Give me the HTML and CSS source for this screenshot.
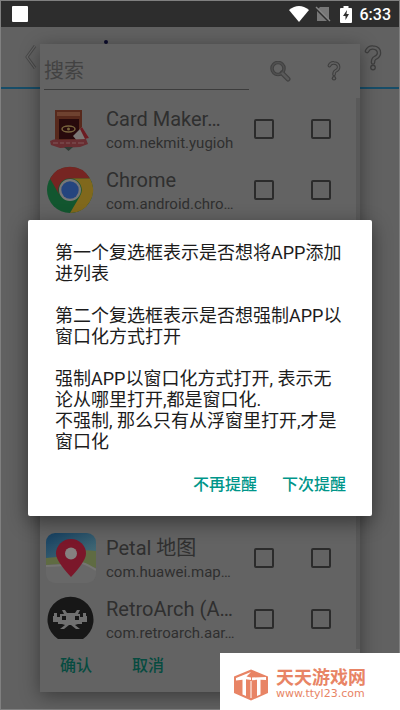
FILE: index.html
```html
<!DOCTYPE html>
<html lang="zh-CN">
<head>
<meta charset="utf-8">
<meta name="viewport" content="width=device-width, initial-scale=1">
<title>搜索</title>
<link rel="stylesheet" href="styles.css">
</head>
<body>
<div class="screen">
  <header class="status">
    <span class="status-app"></span>
    <svg class="status-wifi" viewBox="0 0 20 16"><path d="M0 4Q10-4 20 4L10 16Z" fill="#fff"/></svg>
    <svg class="status-sim" viewBox="0 0 16 16"><path d="M5 1h9v13L3 3Z M2 5l10 10H2Z" fill="#777"/><path d="M1 1l14 14" stroke="#858585" stroke-width="1.4"/></svg>
    <svg class="status-battery" viewBox="0 0 12 17"><path d="M3.500 0h5v2H11q1 0 1 1v13q0 1-1 1H1q-1 0-1-1V3q0-1 1-1h2.500Z" fill="#fff"/><path d="M7 4L3 10h2.500v4L9 8H6.500Z" fill="#2d2d2d"/></svg>
    <time class="status-time">6:33</time>
  </header>

  <div class="toolbar">
    <svg class="back" viewBox="0 0 12 24"><path d="M10 1L2 12l8 11" fill="none" stroke="#494949" stroke-width="3"/><path d="M10 1L2 12l8 11" fill="none" stroke="#656565" stroke-width="1.200"/></svg>
    <svg class="dot" viewBox="0 0 6 6"><circle cx="3" cy="3" r="2" fill="#0c0c2c"/></svg>
    <svg class="help-large" viewBox="0 0 18 26"><use href="#question"/></svg>
  </div>

  <main class="stage">
    <section class="panel">
      <div class="search">
        <input class="search-input" type="text" placeholder="搜索" aria-label="搜索">
        <button class="icon-button" type="button" aria-label="搜索">
          <svg class="glass" viewBox="0 0 21 21"><g fill="none" stroke="#424242"><circle cx="8" cy="7.500" r="6" stroke-width="3.600"/><path d="M12 12l6 6" stroke-width="5" stroke-linecap="round"/></g><g fill="none" stroke="#505050"><circle cx="8" cy="7.500" r="6" stroke-width="1.300"/><path d="M12.500 12.500l5.500 5.500" stroke="#5a5a5a" stroke-width="2.500" stroke-linecap="round"/></g></svg>
        </button>
        <button class="icon-button" type="button" aria-label="帮助">
          <svg class="help-small" viewBox="0 0 18 26">
            <g id="question" fill="none" stroke-linejoin="round" stroke-linecap="round"><path d="M3 6Q5 2 9 2.500Q15 3 15 8Q15 11 11 13Q9 14 9 17.500" stroke="#3e3e3e" stroke-width="4.600"/><circle cx="9" cy="22.500" r="2.900" fill="#3e3e3e"/><path d="M3 6Q5 2 9 2.500Q15 3 15 8Q15 11 11 13Q9 14 9 17.500" stroke="#606060" stroke-width="2"/><circle cx="9" cy="22.500" r="1.500" fill="#606060"/></g>
          </svg>
        </button>
      </div>

      <div class="list">
        <div class="row">
          <svg class="app-icon" viewBox="0 0 50 50">
            <rect x="9" y="6" width="27" height="31" fill="#57291c"/><rect x="11" y="8" width="23" height="4" fill="#6f4230"/><rect x="13" y="15" width="20" height="20" fill="#280a0c"/>
            <ellipse cx="22.500" cy="25" rx="6.500" ry="3" fill="none" stroke="#77633c" stroke-width="1.500"/><circle cx="22.500" cy="25" r="1.500" fill="#77633c"/>
            <path d="M27 32l9-9 7 11-11 4Z" fill="#7b7774"/><path d="M36 23l7 11-4 1-5-10Z" fill="#6c1c22"/>
            <path d="M4 37q5-3 10-1l26-1 2 5-8 3-20 1-9-3Z" fill="#682d31"/>
            <path d="M7 39h5m2 0h4m2 0h4m2 0h4m2 0h6" stroke="#80585a" stroke-width="1.200"/><path d="M18 43h9l-4.500 4Z" fill="#303b35"/>
          </svg>
          <div class="app-text"><div class="app-name">Card Maker…</div><div class="app-package">com.nekmit.yugioh</div></div>
          <input class="check" type="checkbox" aria-label="Card Maker 添加进列表"><input class="check" type="checkbox" aria-label="Card Maker 窗口化方式打开">
        </div>
        <div class="row">
          <svg class="app-icon" viewBox="0 0 50 50">
            <circle cx="24" cy="25" r="23" fill="#12562f"/>
            <path d="M4 13.500A23 23 0 0 1 44 13.500H24A11.500 11.500 0 0 0 14 31Z" fill="#762522"/>
            <path d="M24 13.500h20A23 23 0 0 1 24 48L34 31A11.500 11.500 0 0 0 24 13.500Z" fill="#80681c"/>
            <circle cx="24" cy="25" r="11" fill="#777"/><circle cx="24" cy="25" r="8.700" fill="#25457e"/>
          </svg>
          <div class="app-text"><div class="app-name">Chrome</div><div class="app-package">com.android.chro…</div></div>
          <input class="check" type="checkbox" aria-label="Chrome 添加进列表"><input class="check" type="checkbox" aria-label="Chrome 窗口化方式打开">
        </div>
        <div class="row row-late">
          <svg class="app-icon" viewBox="0 0 50 50">
            <defs>
              <linearGradient id="sky" x1="0" y1="0" x2="1" y2="1"><stop offset="0" stop-color="#153f61"/><stop offset="1" stop-color="#497078"/></linearGradient>
              <clipPath id="tile"><rect width="50" height="50" rx="9"/></clipPath>
            </defs>
            <g clip-path="url(#tile)"><path d="M0 0h50v50H0Z" fill="#656565"/><path d="M0 0h50v26H0Z" fill="url(#sky)"/><path d="M0 25q18-1 26-5t24-2v17L34 30 0 32Z" fill="#5f6b42"/><path d="M0 32l27-1q10-1 23 5v14H0Z" fill="#686868"/><path d="M0 33q18 0 27-3 8-3 23 7" fill="none" stroke="#757572" stroke-width="2"/></g>
            <path d="M25 44Q10 28 10 20.500a15 14.500 0 0 1 30 0Q40 28 25 44Z" fill="#7b172a"/><circle cx="25" cy="20.500" r="6" fill="#858180"/>
          </svg>
          <div class="app-text"><div class="app-name">Petal 地图</div><div class="app-package">com.huawei.map…</div></div>
          <input class="check" type="checkbox" aria-label="Petal 地图 添加进列表"><input class="check" type="checkbox" aria-label="Petal 地图 窗口化方式打开">
        </div>
        <div class="row">
          <svg class="app-icon" viewBox="0 0 50 50">
            <path d="M12 45A23 23 0 1 1 37 45Z" fill="#171717"/>
            <path d="M16 16h3l2 3h8l2-3h3l-2 4h2v3h3v-4h3v3h1v6h-5v2h-4l-3 1 5 4h-4l-5-4h-2l-5 4h-4l5-4-3-1h-4v-2H7v-6h1v-3h3v4h3v-3h4Z" fill="#707070"/>
            <path d="M16 22h4v4h-4Zm13 0h4v4h-4Z" fill="#171717"/>
          </svg>
          <div class="app-text"><div class="app-name">RetroArch (A…</div><div class="app-package">com.retroarch.aar…</div></div>
          <input class="check" type="checkbox" aria-label="RetroArch 添加进列表"><input class="check" type="checkbox" aria-label="RetroArch 窗口化方式打开">
        </div>
      </div>

      <div class="panel-actions">
        <button class="text-button muted" type="button">确认</button>
        <button class="text-button muted" type="button">取消</button>
      </div>
    </section>

    <div class="dialog-layer">
      <section class="dialog" role="dialog" aria-label="提醒">
        <p class="message">第一个复选框表示是否想将APP添加<br>进列表</p>
        <p class="message">第二个复选框表示是否想强制APP以<br>窗口化方式打开</p>
        <p class="message">强制APP以窗口化方式打开, 表示无<br>论从哪里打开,都是窗口化.<br>不强制, 那么只有从浮窗里打开,才是<br>窗口化</p>
        <div class="dialog-actions">
          <button class="text-button" type="button">不再提醒</button>
          <button class="text-button" type="button">下次提醒</button>
        </div>
      </section>
    </div>
  </main>

  <aside class="brand">
    <svg class="brand-logo" viewBox="0 0 36 32"><path d="M18 .5L35 7.500V24L18 31.500 1 24V7.500Z" fill="#e88465"/><path d="M3 9L18 3l-4.500 4.500L18 8.500V11l-5-.8V27L9.500 25.500V10.800L3 11.500Z" fill="#fff"/><path d="M19 8.500l14-.5v3l-5.500-.3V25.500L24 27V10.800l-5 .4Z" fill="#fff"/><path d="M18 12v17" stroke="#fff" stroke-width="1"/></svg>
    <div class="brand-text"><div class="brand-name">天天游戏网</div><div class="brand-url">www.ttyl23.com</div></div>
  </aside>
</div>
</body>
</html>
```
FILE: styles.css
```css
* {
  box-sizing: border-box;
}

body {
  margin: 0;
  font-family: Roboto, "Noto Sans CJK SC", sans-serif;
  background: #5f5f5f;
}

button,
input {
  font: inherit;
}

button {
  padding: 0;
  border: 0;
  background: none;
}

svg {
  display: block;
  flex: none;
}

.screen {
  position: relative;
  display: flex;
  flex-direction: column;
  min-height: 100vh;
  border: 1px solid #808080;
  background: #616161;
}

.status {
  display: flex;
  align-items: center;
  height: 26px;
  padding: 0 8px 0 11px;
  background: #2d2d2d;
  color: #fff;
}

.status-app {
  width: 16px;
  height: 16px;
  margin-right: auto;
  border-radius: 1px;
  background: #fff;
}

.status-wifi {
  width: 20px;
  height: 16px;
}

.status-sim {
  width: 16px;
  height: 16px;
  margin-left: 6px;
}

.status-battery {
  width: 12px;
  height: 17px;
  margin: 0 8px 0 9px;
}

.status-time {
  font-size: 16px;
  font-weight: 500;
}

.toolbar {
  display: flex;
  align-items: flex-start;
  height: 62px;
  padding: 18px 17px 0 24px;
  border-bottom: 2px solid #174d68;
}

.back {
  width: 12px;
  height: 24px;
}

.dot {
  width: 6px;
  height: 6px;
  margin: -6px auto 0 66px;
}

.help-large {
  width: 18px;
  height: 26px;
}

.stage {
  display: flex;
  flex: 1;
}

.panel {
  position: relative;
  display: flex;
  flex: 1;
  flex-direction: column;
  min-width: 0;
  margin: -45px 39px 17px;
  background: #636363;
  box-shadow: 0 4px 18px rgba(0, 0, 0, 0.4);
}

.search {
  display: flex;
  align-items: center;
  height: 54px;
  padding: 0 19px 0 4px;
}

.search-input {
  flex: 1;
  min-width: 0;
  height: 37px;
  margin-right: 21px;
  padding: 0;
  border: 0;
  border-bottom: 1px solid #3c3c3c;
  border-radius: 0;
  background: none;
  color: #333;
  font-size: 20px;
}

.search-input::placeholder {
  color: #424242;
  opacity: 1;
}

.icon-button + .icon-button {
  margin-left: 36px;
}

.glass {
  width: 21px;
  height: 21px;
}

.help-small {
  width: 14px;
  height: 20px;
}

.list {
  display: flex;
  flex: 1;
  flex-direction: column;
  min-height: 0;
  margin-bottom: -10px;
  border-right: 4px solid #595959;
}

.row {
  display: flex;
  align-items: center;
  height: 61px;
  padding: 0 25px 0 6px;
}

.row-late {
  margin-top: auto;
}

.app-icon {
  width: 50px;
  height: 50px;
}

.app-text {
  flex: 1;
  min-width: 0;
  margin-left: 10px;
  padding-top: 3px;
  color: #2f2f2f;
  white-space: nowrap;
}

.app-name {
  font-size: 20px;
  line-height: 25px;
}

.app-package {
  font-size: 15px;
  line-height: 22px;
}

.check {
  flex: none;
  width: 20px;
  height: 20px;
  margin: 0;
  border: 2px solid #2b2b2b;
  border-radius: 2px;
  appearance: none;
}

.check + .check {
  margin-left: 37px;
}

.panel-actions {
  display: flex;
  gap: 40px;
  height: 53px;
  padding: 0 20px;
}

.text-button {
  color: #00968a;
  font-size: 16px;
  font-weight: 500;
  line-height: 24px;
}

.muted {
  color: #064b40;
}

.dialog-layer {
  position: absolute;
  inset: 26px 27px 0;
  display: flex;
  align-items: center;
}

.dialog {
  flex: 1;
  padding: 22px 26px 19px 27px;
  border-radius: 2px;
  background: #fff;
  box-shadow: 0 6px 20px rgba(0, 0, 0, 0.45);
  color: #1c1c1c;
}

.message {
  margin: 0 0 21px;
  font-size: 18px;
  line-height: 21px;
  white-space: nowrap;
}

.dialog-actions {
  display: flex;
  justify-content: flex-end;
  gap: 25px;
}

.brand {
  position: absolute;
  right: -1px;
  bottom: -1px;
  display: flex;
  align-items: center;
  width: 180px;
  height: 57px;
  padding: 6px 0 0 13px;
  background: #fff;
  color: #e88465;
}

.brand-logo {
  width: 36px;
  height: 32px;
}

.brand-text {
  margin-left: 7px;
}

.brand-name {
  font-size: 18px;
  font-weight: 700;
  line-height: 18px;
}

.brand-url {
  font-family: "DejaVu Sans", sans-serif;
  font-size: 11px;
  line-height: 14px;
}
```
